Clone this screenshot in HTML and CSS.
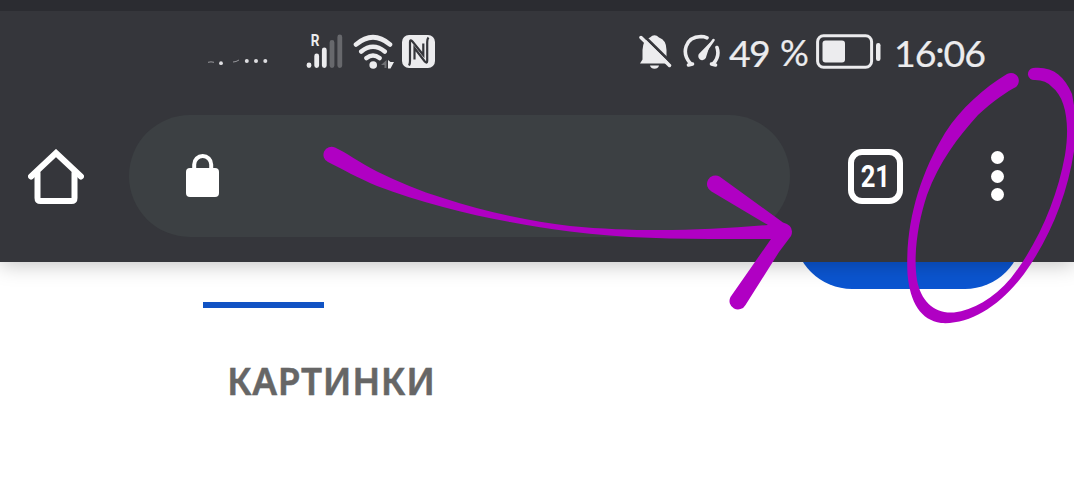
FILE: index.html
```html
<!DOCTYPE html>
<html lang="ru">
<head>
<meta charset="utf-8">
<title>Картинки</title>
<link rel="stylesheet" href="styles.css">
</head>
<body>
<div class="screen">
  <header class="browser">
    <div class="status">
      <svg class="carrier" viewBox="0 0 122 20" fill="#dedee1">
        <path d="M60 12.3q3-.9 6 0M85 12q3 0 6-2" fill="none" stroke="#97979b"/>
        <circle cx="73" cy="13.2" r="1.9"/><circle cx="98.8" cy="11" r="2"/><circle cx="108" cy="11" r="2"/><circle cx="117.3" cy="11" r="2"/>
      </svg>
      <div class="signal">
        <span class="roaming">R</span>
        <svg viewBox="0 0 38 36" fill="none" stroke="#ececee" stroke-width="4.8" stroke-linecap="round">
          <path d="M3 31v.5M10.7 22v9.5M18.3 16v15.500"/>
          <path d="M26 8.500v23M33.8 3v28.500" stroke="#67686c"/>
        </svg>
      </div>
      <svg class="wifi" viewBox="0 0 42 36" fill="none" stroke="#ececee" stroke-width="4.600" stroke-linecap="round">
        <path d="M3 10.500Q20 -4 37 10.500M8.300 17.500Q20 8 31.700 17.500M13.500 24Q20 19 26.500 24"/>
        <circle cx="20.200" cy="31" r="3.800" fill="#ececee" stroke="none"/>
        <path d="M28 31l5.500-5v8h-2v-3z" fill="#707175" stroke="none"/>
        <path d="M35 26v8.500h2.500l3.500-6.500h-3.500z" fill="#ececee" stroke="none"/>
      </svg>
      <svg class="nfc" viewBox="0 0 33 33">
        <rect width="33" height="33" rx="7" fill="#ececee"/>
        <path d="M7 30.500Q8 29 8 26V7Q8 4 10.500 6.500L21.300 20V8.500" fill="none" stroke="#35363b" stroke-width="2.200"/>
        <path d="M12.500 24.500V13L22.800 26.500Q25.200 29 25.200 26V7Q25.200 4 26.500 2.500" fill="none" stroke="#35363b" stroke-width="2.200"/>
      </svg>
      <svg class="bell" viewBox="0 0 33 36" fill="#ececee">
        <path d="M3.500 25.500V16Q4 5.500 11 3.500Q15.500 -1 20 3.500Q27.500 6 27.500 16V25.500L30 29.500H1Z"/>
        <path d="M11 31.500h9q-1 3.300-4.500 3.300t-4.500-3.300z"/>
        <path d="M4 1L33 29.500" fill="none" stroke="#35363b" stroke-width="3"/>
        <path d="M2 3.500L30.500 31.500" fill="none" stroke="#ececee" stroke-width="3.500" stroke-linecap="round"/>
      </svg>
      <svg class="gauge" viewBox="0 0 38 34" fill="none" stroke="#ececee" stroke-width="3.600" stroke-linecap="round">
        <path d="M7.500 29.500C-2 19 2 3 18 2.500Q21 2.500 24 3.800M34 13.500Q37 22 30.500 29.500"/>
        <path d="M5.500 31l4-1M32.500 31l-4-1"/>
        <path d="M30.500 6L20 21" stroke-width="2.600"/>
        <path d="M28 7.500L22.800 24A4 4 0 1 1 16.800 19Z" fill="#ececee" stroke="none"/>
      </svg>
      <span class="level">49</span><span class="percent">%</span>
      <svg class="battery" viewBox="0 0 66 36">
        <rect x="1.600" y="1.800" width="54" height="31.500" rx="6" fill="none" stroke="#ececee" stroke-width="3"/>
        <rect x="6.500" y="6.500" width="22.500" height="22" rx="3" fill="#ececee"/>
        <rect x="60" y="9" width="4.500" height="18" rx="2.200" fill="#ececee"/>
      </svg>
      <time class="clock">16:06</time>
    </div>
    <div class="toolbar">
      <svg class="home" viewBox="0 0 56 56" fill="none" stroke="#fff" stroke-width="6" stroke-linecap="round">
        <path d="M3 27.500L28 4L53 27.500"/>
        <path d="M9.500 24V49Q9.500 52 12.500 52H43.500Q46.500 52 46.500 49V24"/>
      </svg>
      <div class="address">
        <svg class="lock" viewBox="0 0 33 43">
          <path d="M8.200 16V10.500a8.500 8.500 0 0 1 17 0V16" fill="none" stroke="#fff" stroke-width="4"/>
          <rect y="14" width="33" height="29" rx="4" fill="#fff"/>
        </svg>
      </div>
      <div class="tabs"><span>21</span></div>
      <div class="menu"><i></i><i></i><i></i></div>
    </div>
  </header>
  <main class="page">
    <div class="button"></div>
    <div class="underline"></div>
    <div class="tab">КАРТИНКИ</div>
  </main>
  <svg class="marker" viewBox="0 0 1074 481" fill="#b000c3">
    <path d="M335 147.500C345 152 359 162 377 171.500C398 182 420 191 443 198C465 205 488 211.500 510 216C530 220.500 550 223.500 570 226C645 233 705 230 768 225L711.500 191.500A8 8 0 0 1 719.500 176.500L783 222.500Q795 226 791 236L779 252L745.500 305A8.500 8.500 0 0 1 730.500 297L771 239C700 239 635 240 570 231.500C550 229 530 226 510 222C487 218 465 213 443 207C420 201 398 194 377 186C358 178 342 169 328 162A8 8 0 0 1 335 147.500Z"/>
    <path fill-rule="evenodd" d="M1007 74C1016 70 1023 80 1016 87C1008 91 993 101 978 115C958 137 939 162 927 195C918 222 913 255 917 280C921 301 934 314 954 312.500C973 310 993 299 1011 278C1037 245 1057 200 1065 155C1070 124 1066 98 1052 87Q1046 80 1035 80A6 6 0 0 1 1033 68C1052 66 1064 75 1072 94L1077 122C1074 180 1054 232 1024 274C1000 306 970 325 941 323C921 320 910 303 907.500 274C905 225 919 176 945 133C961 108 984 88 1007 74Z"/>
  </svg>
</div>
</body>
</html>
```
FILE: styles.css
```css
* { box-sizing: border-box; }
body { margin: 0; background: #fff; font-family: Lato, "Noto Sans", sans-serif; }
svg { display: block; flex: none; }
.screen { position: relative; height: 481px; overflow: hidden; }
.browser {
  position: relative;
  z-index: 1;
  height: 262px;
  border-top: 11px solid #2b2c31;
  background: #35363b;
  box-shadow: 0 2px 20px rgba(0, 0, 0, .25);
}
.status { display: flex; height: 89px; padding: 23px 0 0 148px; color: #ececee; }
.carrier { width: 122px; height: 20px; margin-top: 16px; }
.signal { display: grid; width: 38px; height: 36px; margin-left: 36px; flex: none; }
.signal > * { grid-area: 1 / 1; }
.roaming { padding-left: 6px; font: 700 17px/13px Roboto, sans-serif; transform: scaleX(.8); transform-origin: 0 0; }
.wifi { width: 42px; height: 36px; margin-left: 9px; }
.nfc { width: 33px; height: 33px; margin: 1px 0 0 7px; }
.bell { width: 33px; height: 36px; margin-left: 204px; }
.gauge { width: 38px; height: 34px; margin-left: 11px; }
.level, .percent, .clock { flex: none; font-size: 37.5px; line-height: 37px; white-space: nowrap; -webkit-text-stroke: .2px; }
.level { width: 39px; margin-left: 8px; letter-spacing: -1.8px; }
.percent { width: 28px; margin-left: 12px; font-size: 36px; letter-spacing: -2px; }
.battery { width: 66px; height: 36px; margin-left: 8px; }
.clock { margin-left: 12px; letter-spacing: -1.1px; }
.toolbar { display: flex; align-items: center; height: 151px; padding-left: 28px; }
.home { width: 56px; height: 56px; margin-top: 2px; }
.address {
  display: flex;
  width: 661px;
  height: 122px;
  flex: none;
  margin-left: 45px;
  padding: 39px 0 0 57px;
  border-radius: 61px;
  background: #3c4043;
}
.lock { width: 33px; height: 43px; }
.tabs {
  display: grid;
  place-items: center;
  width: 55px;
  height: 55px;
  margin: 1px 0 0 58px;
  border: 6px solid #fff;
  border-radius: 14px;
  color: #fff;
  font: 700 32px/1 Roboto, sans-serif;
}
.tabs span { transform: scaleX(.8); }
.menu { display: grid; gap: 5.500px; margin: 1px 0 0 88px; }
.menu i { width: 13px; height: 13px; border-radius: 50%; background: #fff; }
.page { display: flex; flex-direction: column; }
.button { width: 229px; height: 120px; margin: -93px 0 0 794px; border-radius: 58px; background: #0b55d0; }
.underline { width: 121px; height: 6px; margin: 13px 0 0 203px; background: #1153c4; }
.tab {
  margin: 54px 0 0 227px;
  color: #666;
  font: 600 37px/38px "Noto Sans", sans-serif;
  letter-spacing: .6px;
  -webkit-text-stroke: .5px;
}
.marker { position: absolute; z-index: 2; inset: 0; width: 1074px; height: 481px; }
```
